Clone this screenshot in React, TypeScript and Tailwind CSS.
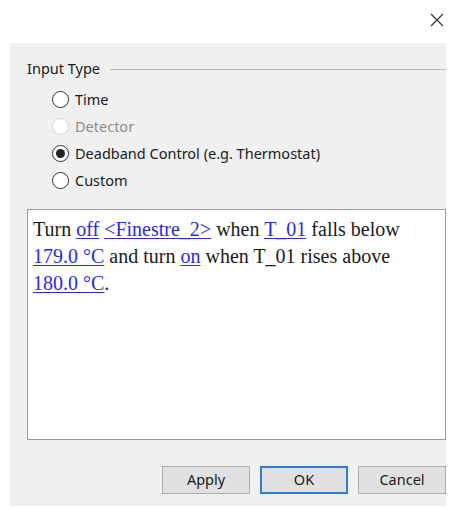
import React from "react";

const ui = { fontFamily: '"Noto Sans", "Open Sans", sans-serif' };
const serif = { fontFamily: '"Liberation Serif", "Times New Roman", serif' };

function Radio({ label, checked, disabled }: { label: string; checked?: boolean; disabled?: boolean }) {
  return (
    <div className="flex items-center h-[27px]">
      <span
        className={
          "flex items-center justify-center w-[17px] h-[17px] rounded-full border bg-white " +
          (disabled ? "border-[#d6d6d6]" : "border-[#333333]")
        }
      >
        {checked && <span className="block w-[9px] h-[9px] rounded-full bg-[#222222]" />}
      </span>
      <span className={"ml-[6px] text-[14.5px] " + (disabled ? "text-[#8d8d8d]" : "text-[#1b1b1b]")}>{label}</span>
    </div>
  );
}

function Link({ children }: { children: React.ReactNode }) {
  return <span className="text-[#2a2ae0] underline decoration-1 underline-offset-2">{children}</span>;
}

function Btn({ label, primary }: { label: string; primary?: boolean }) {
  return (
    <button
      className={
        "w-[88px] h-[28px] text-[14.5px] text-[#1b1b1b] bg-[#e1e1e1] " +
        (primary ? "border-2 border-[#2a7fd4]" : "border border-[#adadad]")
      }
    >
      {label}
    </button>
  );
}

export default function App() {
  return (
    <div className="w-[450px] h-[507px] bg-white flex flex-col" style={ui}>
      <div className="h-[43px] flex justify-end items-start pr-[5px] pt-[12px]">
        <svg width="16" height="16" viewBox="0 0 16 16" className="text-[#333]">
          <path d="M2 2 L14 14 M14 2 L2 14" stroke="currentColor" strokeWidth="1.2" fill="none" />
        </svg>
      </div>
      <div className="ml-[10px] mr-[4px] mb-[1px] flex-1 bg-[#f0f0f0] flex flex-col pl-[17px]">
        <div className="flex items-center mt-[16px] h-[20px]">
          <span className="text-[14.5px] text-[#1b1b1b]">Input Type</span>
          <div className="flex-1 ml-[10px] h-px bg-[#b8b8b8]" />
        </div>
        <div className="flex flex-col pl-[25px] mt-[7px]">
          <Radio label="Time" />
          <Radio label="Detector" disabled />
          <Radio label="Deadband Control (e.g. Thermostat)" checked />
          <Radio label="Custom" />
        </div>
        <div
          className="mt-[15px] h-[231px] bg-white border border-[#9a9a9a] px-[5px] pt-[6px] text-[20px] leading-[27px] text-[#1a1a1a]"
          style={serif}
        >
          Turn <Link>off</Link> <Link>&lt;Finestre_2&gt;</Link> when <Link>T_01</Link> falls below{" "}
          <Link>179.0 °C</Link> and turn <Link>on</Link> when T_01 rises above <Link>180.0 °C</Link>.
        </div>
        <div className="flex justify-end gap-[10px] mt-[26px]">
          <Btn label="Apply" />
          <Btn label="OK" primary />
          <Btn label="Cancel" />
        </div>
      </div>
    </div>
  );
}
